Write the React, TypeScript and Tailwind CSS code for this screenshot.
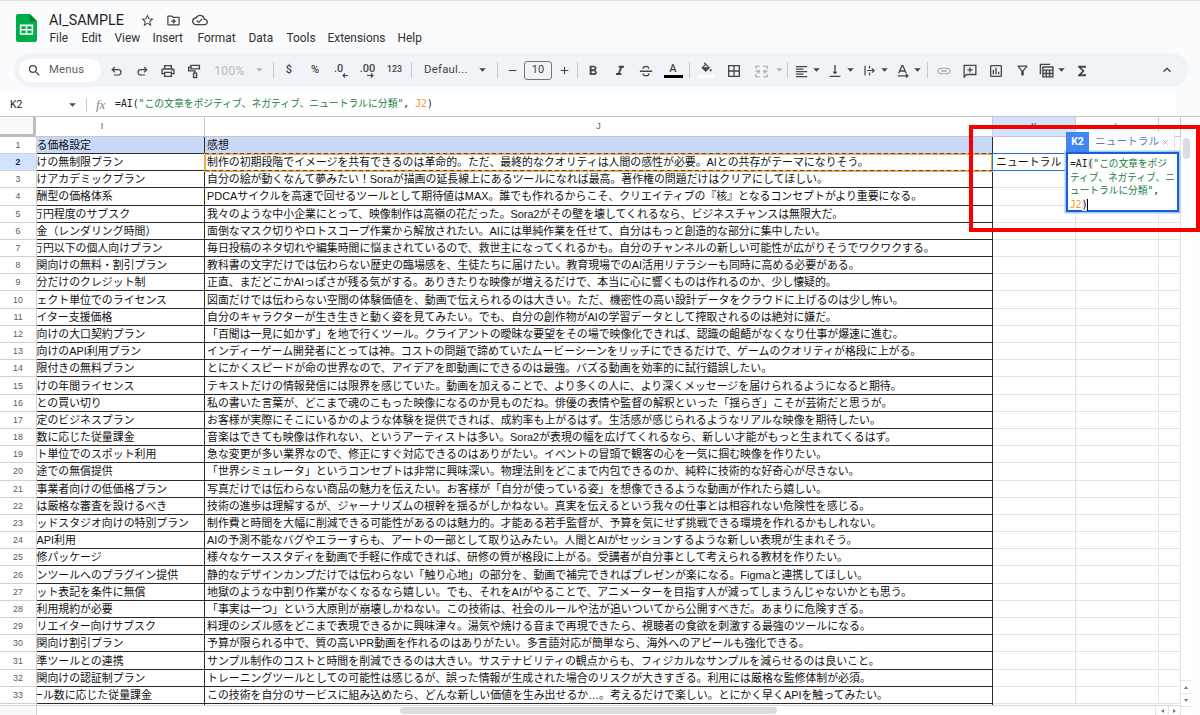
import type { ReactNode } from "react";
import {
  MdStarBorder,
  MdOutlineDriveFileMove,
  MdOutlineCloudDone,
  MdSearch,
  MdOutlinePrint,
  MdFormatBold,
  MdFormatItalic,
  MdBorderAll,
  MdFormatAlignLeft,
  MdVerticalAlignBottom,
  MdLink,
  MdOutlineInsertChart,
  MdOutlineFilterAlt,
  MdFunctions,
  MdKeyboardArrowUp,
  MdRemove,
  MdAdd,
} from "react-icons/md";

const rows: [string, string][] = [
  ["る価格設定", "感想"],
  ["けの無制限プラン", "制作の初期段階でイメージを共有できるのは革命的。ただ、最終的なクオリティは人間の感性が必要。AIとの共存がテーマになりそう。"],
  ["けアカデミックプラン", "自分の絵が動くなんて夢みたい！Soraが描画の延長線上にあるツールになれば最高。著作権の問題だけはクリアにしてほしい。"],
  ["酬型の価格体系", "PDCAサイクルを高速で回せるツールとして期待値はMAX。誰でも作れるからこそ、クリエイティブの『核』となるコンセプトがより重要になる。"],
  ["万円程度のサブスク", "我々のような中小企業にとって、映像制作は高嶺の花だった。Sora2がその壁を壊してくれるなら、ビジネスチャンスは無限大だ。"],
  ["金（レンダリング時間）", "面倒なマスク切りやロトスコープ作業から解放されたい。AIには単純作業を任せて、自分はもっと創造的な部分に集中したい。"],
  ["万円以下の個人向けプラン", "毎日投稿のネタ切れや編集時間に悩まされているので、救世主になってくれるかも。自分のチャンネルの新しい可能性が広がりそうでワクワクする。"],
  ["関向けの無料・割引プラン", "教科書の文字だけでは伝わらない歴史の臨場感を、生徒たちに届けたい。教育現場でのAI活用リテラシーも同時に高める必要がある。"],
  ["分だけのクレジット制", "正直、まだどこかAIっぽさが残る気がする。ありきたりな映像が増えるだけで、本当に心に響くものは作れるのか、少し懐疑的。"],
  ["ェクト単位でのライセンス", "図面だけでは伝わらない空間の体験価値を、動画で伝えられるのは大きい。ただ、機密性の高い設計データをクラウドに上げるのは少し怖い。"],
  ["イター支援価格", "自分のキャラクターが生き生きと動く姿を見てみたい。でも、自分の創作物がAIの学習データとして搾取されるのは絶対に嫌だ。"],
  ["向けの大口契約プラン", "「百聞は一見に如かず」を地で行くツール。クライアントの曖昧な要望をその場で映像化できれば、認識の齟齬がなくなり仕事が爆速に進む。"],
  ["向けのAPI利用プラン", "インディーゲーム開発者にとっては神。コストの問題で諦めていたムービーシーンをリッチにできるだけで、ゲームのクオリティが格段に上がる。"],
  ["限付きの無料プラン", "とにかくスピードが命の世界なので、アイデアを即動画にできるのは最強。バズる動画を効率的に試行錯誤したい。"],
  ["けの年間ライセンス", "テキストだけの情報発信には限界を感じていた。動画を加えることで、より多くの人に、より深くメッセージを届けられるようになると期待。"],
  ["との買い切り", "私の書いた言葉が、どこまで魂のこもった映像になるのか見ものだね。俳優の表情や監督の解釈といった「揺らぎ」こそが芸術だと思うが。"],
  ["定のビジネスプラン", "お客様が実際にそこにいるかのような体験を提供できれば、成約率も上がるはず。生活感が感じられるようなリアルな映像を期待したい。"],
  ["数に応じた従量課金", "音楽はできても映像は作れない、というアーティストは多い。Sora2が表現の幅を広げてくれるなら、新しい才能がもっと生まれてくるはず。"],
  ["ト単位でのスポット利用", "急な変更が多い業界なので、修正にすぐ対応できるのはありがたい。イベントの冒頭で観客の心を一気に掴む映像を作りたい。"],
  ["途での無償提供", "「世界シミュレータ」というコンセプトは非常に興味深い。物理法則をどこまで内包できるのか、純粋に技術的な好奇心が尽きない。"],
  ["事業者向けの低価格プラン", "写真だけでは伝わらない商品の魅力を伝えたい。お客様が「自分が使っている姿」を想像できるような動画が作れたら嬉しい。"],
  ["は厳格な審査を設けるべき", "技術の進歩は理解するが、ジャーナリズムの根幹を揺るがしかねない。真実を伝えるという我々の仕事とは相容れない危険性を感じる。"],
  ["ッドスタジオ向けの特別プラン", "制作費と時間を大幅に削減できる可能性があるのは魅力的。才能ある若手監督が、予算を気にせず挑戦できる環境を作れるかもしれない。"],
  ["API利用", "AIの予測不能なバグやエラーすらも、アートの一部として取り込みたい。人間とAIがセッションするような新しい表現が生まれそう。"],
  ["修パッケージ", "様々なケーススタディを動画で手軽に作成できれば、研修の質が格段に上がる。受講者が自分事として考えられる教材を作りたい。"],
  ["ンツールへのプラグイン提供", "静的なデザインカンプだけでは伝わらない「触り心地」の部分を、動画で補完できればプレゼンが楽になる。Figmaと連携してほしい。"],
  ["ット表記を条件に無償", "地獄のような中割り作業がなくなるなら嬉しい。でも、それをAIがやることで、アニメーターを目指す人が減ってしまうんじゃないかとも思う。"],
  ["利用規約が必要", "「事実は一つ」という大原則が崩壊しかねない。この技術は、社会のルールや法が追いついてから公開すべきだ。あまりに危険すぎる。"],
  ["リエイター向けサブスク", "料理のシズル感をどこまで表現できるかに興味津々。湯気や焼ける音まで再現できたら、視聴者の食欲を刺激する最強のツールになる。"],
  ["関向け割引プラン", "予算が限られる中で、質の高いPR動画を作れるのはありがたい。多言語対応が簡単なら、海外へのアピールも強化できる。"],
  ["準ツールとの連携", "サンプル制作のコストと時間を削減できるのは大きい。サステナビリティの観点からも、フィジカルなサンプルを減らせるのは良いこと。"],
  ["関向けの認証制プラン", "トレーニングツールとしての可能性は感じるが、誤った情報が生成された場合のリスクが大きすぎる。利用には厳格な監修体制が必須。"],
  ["ール数に応じた従量課金", "この技術を自分のサービスに組み込めたら、どんな新しい価値を生み出せるか…。考えるだけで楽しい。とにかく早くAPIを触ってみたい。"],
];

// Rows whose first visible character is partly scrolled out of the column.
const scrolled = new Set([5, 7, 33]);

const Cell = ({ w, children }: { w: string; children: ReactNode }) => (
  <div className={`flex h-full shrink-0 items-center justify-center ${w}`}>{children}</div>
);

const Divider = ({ m }: { m: string }) => <div className={`h-4 w-px shrink-0 bg-[#c7cacd] ${m}`} />;

const Caret = ({ dim = false }: { dim?: boolean }) => (
  <svg viewBox="0 0 8 4" className={`h-[4px] w-[7px] shrink-0 ${dim ? "text-[#b4b7ba]" : "text-[#444746]"}`}>
    <path d="M0.3 0h7.4L4 4z" fill="currentColor" />
  </svg>
);

const Svg = ({ children, className = "h-4 w-4" }: { children: ReactNode; className?: string }) => (
  <svg viewBox="0 0 16 16" fill="none" stroke="currentColor" strokeWidth="1.5" className={`shrink-0 ${className}`}>
    {children}
  </svg>
);

const SheetsLogo = () => (
  <svg viewBox="0 0 22 29" preserveAspectRatio="none" className="h-[28px] w-[21px] shrink-0">
    <path d="M2 0h12.500L22 7.500V27a2 2 0 0 1-2 2H2a2 2 0 0 1-2-2V2a2 2 0 0 1 2-2z" fill="#00ac47" />
    <path d="M14.500 0 22 7.500h-6.500a1 1 0 0 1-1-1z" fill="#00832d" />
    <path d="M4 11h14v10.500H4zM5.600 12.600v2.900h4.600v-2.900zM11.800 12.600v2.900h4.600v-2.900zM5.600 17v2.900h4.600V17zM11.800 17v2.900h4.600V17z" fill="#fff" fillRule="evenodd" />
  </svg>
);

const TitleBar = () => (
  <header className="flex h-[52px] shrink-0 pt-[9px] pl-[16px]">
    <div className="pt-[4px]">
      <SheetsLogo />
    </div>
    <div className="ml-[12px] flex flex-col">
      <div className="flex h-[20px] items-center text-[#444746]">
        <span className="w-[91px] text-[14.300px] leading-[20px] text-[#1f1f1f]">AI_SAMPLE</span>
        <MdStarBorder className="size-[15px]" />
        <MdOutlineDriveFileMove className="ml-[11px] size-[15px]" />
        <MdOutlineCloudDone className="ml-[11px] size-[16px]" />
      </div>
      <nav className="flex h-[17px] items-center pl-[0.500px] text-[11.900px] text-[#303233]">
        <span className="w-[32px]">File</span>
        <span className="w-[33px]">Edit</span>
        <span className="w-[38px]">View</span>
        <span className="w-[45px]">Insert</span>
        <span className="w-[51px]">Format</span>
        <span className="w-[38px]">Data</span>
        <span className="w-[41px]">Tools</span>
        <span className="w-[70px]">Extensions</span>
        <span>Help</span>
      </nav>
    </div>
  </header>
);

const Toolbar = () => (
  <div className="ml-[14px] flex h-[34px] w-[1174px] shrink-0 items-center rounded-full bg-[#f0f4f9] pl-[5px] text-[#444746]">
    <div className="flex h-[23px] w-[82px] shrink-0 items-center rounded-full bg-white pl-[8px]">
      <MdSearch className="size-[15px]" />
      <span className="ml-[7px] text-[11.300px] tracking-[0.02em] text-[#5c5f61]">Menus</span>
    </div>
    <div className="w-[2px] shrink-0" />
    <Cell w="w-[26px]">
      <Svg className="mt-[3px] h-[13px] w-[13px]">
        <path d="M6 2.500 2.800 5.700 6 8.900M3 5.700h7.200a3.200 3.200 0 0 1 0 6.600H4.800" />
      </Svg>
    </Cell>
    <Cell w="w-[26px]">
      <Svg className="mt-[3px] h-[13px] w-[13px]">
        <path d="M10 2.500l3.200 3.200L10 8.900M13 5.700H5.800a3.200 3.200 0 0 0 0 6.600h5.400" />
      </Svg>
    </Cell>
    <Cell w="w-[26px]"><MdOutlinePrint className="mt-[2px] size-[16px]" /></Cell>
    <Cell w="w-[26px]">
      <Svg className="mt-[2px] h-[15px] w-[15px]">
        <path d="M4.300 1.500h8.900v3.700H4.300zM4.300 3.300H1.800v4h6.700v2M7 9.700h3.200v4.800H7z" />
      </Svg>
    </Cell>
    <Cell w="w-[45px]"><span className="mt-[2px] text-[12px] tracking-[0.03em] text-[#b7babd]">100%</span></Cell>
    <Cell w="w-[14px]"><Caret dim /></Cell>
    <Divider m="ml-[7px] mr-[2px]" />
    <Cell w="w-[26px]"><span className="text-[11px] font-medium">$</span></Cell>
    <Cell w="w-[26px]"><span className="text-[11px] font-medium">%</span></Cell>
    <Cell w="w-[26px]">
      <div className="flex flex-col pt-px">
        <span className="text-[11px] leading-[9px] font-medium">.0</span>
        <svg viewBox="0 0 14 5" className="h-[5px] w-[14px]" stroke="currentColor" fill="none"><path d="M14 2.500H9M11 .5l-2 2 2 2" strokeWidth="1.100" /></svg>
      </div>
    </Cell>
    <Cell w="w-[27px]">
      <div className="flex flex-col pt-px">
        <span className="text-[11px] leading-[9px] font-medium">.00</span>
        <svg viewBox="0 0 14 5" className="h-[5px] w-[14px]" stroke="currentColor" fill="none"><path d="M7 2.500h6M11 .5l2 2-2 2" strokeWidth="1.100" /></svg>
      </div>
    </Cell>
    <Cell w="w-[27px]"><span className="text-[8.800px] font-medium">123</span></Cell>
    <Divider m="ml-[3px] mr-[12px]" />
    <span className="w-[48px] shrink-0 text-[11.400px] tracking-[0.02em]">Defaul...</span>
    <Cell w="w-[20px]"><Caret /></Cell>
    <Divider m="ml-[5px] mr-[2px]" />
    <Cell w="w-[24px]"><MdRemove className="size-[13px]" /></Cell>
    <div className="flex h-[19px] w-[28px] shrink-0 items-center justify-center rounded-[3px] border border-[#747775] text-[11px]">10</div>
    <Cell w="w-[24px]"><MdAdd className="size-[13px]" /></Cell>
    <Divider m="ml-[1px] mr-[2px]" />
    <Cell w="w-[26px]"><MdFormatBold className="mt-px size-[16px]" /></Cell>
    <Cell w="w-[27px]"><MdFormatItalic className="mt-px size-[16px]" /></Cell>
    <Cell w="w-[26px]">
      <Svg className="mt-px h-[14px] w-[14px]">
        <path d="M1 8.300h14M11.300 5.300C10.900 3.600 9.800 2.800 8 2.800c-2 0-3.300 1-3.300 2.500M4.600 11c.4 1.700 1.500 2.500 3.400 2.500 2 0 3.400-1 3.400-2.700" />
      </Svg>
    </Cell>
    <Cell w="w-[28px]">
      <div className="flex flex-col items-center pt-px">
        <span className="text-[11px] leading-[11px] font-medium">A</span>
        <div className="mt-px h-[3px] w-[19px] bg-black" />
      </div>
    </Cell>
    <Divider m="ml-[2px] mr-[3px]" />
    <Cell w="w-[27px]">
      <div className="flex flex-col items-center">
        <Svg className="h-[12px] w-[13px]">
          <path d="M5 1l6.500 6.500L7 12 2.500 7.500 7 3" />
          <path d="M3 7.800h8L7 12z" fill="currentColor" />
          <circle cx="13.500" cy="11" r="1.500" fill="currentColor" stroke="none" />
        </Svg>
        <div className="mt-px h-[3px] w-[17px] bg-white" />
      </div>
    </Cell>
    <Cell w="w-[28px]"><MdBorderAll className="mt-[2px] size-[16px]" /></Cell>
    <Cell w="w-[26px]">
      <Svg className="mt-[2px] h-[15px] w-[15px] text-[#b0b3b6]">
        <path d="M2 5V2.500h4M10 2.500h4V5M2 11v2.500h4M10 13.500h4V11M1.500 8h4M4 6.200 5.700 8 4 9.800M14.500 8h-4M12 6.200 10.300 8 12 9.800" />
      </Svg>
    </Cell>
    <Cell w="w-[10px]"><Caret dim /></Cell>
    <Divider m="ml-[3px] mr-[2px]" />
    <Cell w="w-[22px]"><MdFormatAlignLeft className="mt-[2px] size-[15px]" /></Cell>
    <Cell w="w-[9px]"><Caret /></Cell>
    <Cell w="ml-[3px] w-[22px]"><MdVerticalAlignBottom className="mt-[2px] size-[16px]" /></Cell>
    <Cell w="w-[9px]"><Caret /></Cell>
    <Cell w="ml-[3px] w-[22px]">
      <Svg className="mt-px h-[13px] w-[13px]">
        <path d="M2.500 2v12M8 2v3.500M8 10.500V14M5 8h8.500M11 5.300 13.700 8 11 10.700" />
      </Svg>
    </Cell>
    <Cell w="w-[8px]"><Caret /></Cell>
    <Cell w="ml-[4px] w-[22px]">
      <Svg className="mt-px h-[14px] w-[14px]">
        <path d="M3 10.500 6.800 2h1L11.600 10.500M4.300 8h6M2 13.500h11M11.500 11.500l2 2-2 2" />
      </Svg>
    </Cell>
    <Cell w="w-[7px]"><Caret /></Cell>
    <Divider m="ml-[6px] mr-[2px]" />
    <Cell w="w-[27px]"><MdLink className="mt-px size-[16px] text-[#a9acaf]" /></Cell>
    <Cell w="w-[25px]">
      <Svg className="mt-px h-[14px] w-[14px]">
        <path d="M1.300 15V1.500h13.400V12H4.200zM8 3.800v6M5 6.800h6" />
      </Svg>
    </Cell>
    <Cell w="w-[27px]"><MdOutlineInsertChart className="mt-px size-[16px]" /></Cell>
    <Cell w="w-[26px]"><MdOutlineFilterAlt className="mt-px size-[15px]" /></Cell>
    <Cell w="w-[22px]">
      <Svg className="mt-px h-[15px] w-[15px]">
        <path d="M4.200 4.200h10.600v10.600H4.200zM4.200 7.600h10.600M4.200 11.200h10.600M7.700 7.600v7.200M11.300 7.600v7.200M1.500 12V1.500H12" />
      </Svg>
    </Cell>
    <Cell w="w-[9px]"><Caret /></Cell>
    <Cell w="ml-[3px] w-[26px]"><MdFunctions className="mt-px size-[16px]" /></Cell>
    <div className="mr-[13px] ml-auto">
      <MdKeyboardArrowUp className="size-[16px]" />
    </div>
  </div>
);

const mono = "font-['DejaVu_Sans_Mono','Noto_Sans_CJK_JP',monospace]";

const FormulaBar = () => (
  <div className="mt-[6px] flex h-[23px] w-[1176px] shrink-0 items-center bg-white">
    <span className="w-[69px] pl-[10px] text-[10.500px] text-[#1f1f1f]">K2</span>
    <Caret />
    <div className="ml-[10px] h-[14px] w-px bg-[#c7cacd]" />
    <span className="ml-[9px] w-[19px] font-['Liberation_Serif',serif] text-[13px] text-[#80868b] italic">fx</span>
    <span className={`text-[9.800px] whitespace-pre text-[#202124] ${mono}`}>
      =AI(<span className="text-[#188038]">"この文章をポジティブ、ネガティブ、ニュートラルに分類"</span>, <span className="text-[#f7981d]">J2</span>)
    </span>
  </div>
);

const heading = "flex shrink-0 items-center justify-center border-r border-[#c7c9cc]";

const ColumnHeaders = () => (
  <div className="flex h-[20.800px] shrink-0 border-t border-[#c4c6c8] bg-white text-[9px] text-[#575b5f]">
    <div className="h-full w-[36px] shrink-0 border-r-[3px] border-b-[3px] border-[#bdbdbd] bg-[#f8f9fa]" />
    <div className="flex border-b border-[#c4c6c8]">
      <div className={`${heading} w-[169px] pr-[36px]`}>I</div>
      <div className={`${heading} w-[788px]`}>J</div>
      <div className={`${heading} w-[83px] bg-[#d3e3fd] text-[#0b2e6b]`}>K</div>
      <div className={`${heading} w-[83px]`}>L</div>
      <div className={`${heading} w-[22px]`} />
    </div>
    <div className="flex-1 bg-[#f9fbfd]" />
  </div>
);

const Grid = () => (
  <div className="relative flex flex-1 overflow-hidden bg-white">
    <div className="w-[1181px] shrink-0">
      {rows.map(([plan, comment], i) => {
        const n = i + 1;
        const fill = n === 1 ? "bg-[#c9daf8]" : "bg-white";
        return (
          <div key={n} className="flex h-[17.190px] text-[10.900px] leading-[16px] whitespace-nowrap text-[#111]">
            <div className={`flex w-[37px] shrink-0 items-center justify-center border-r border-b border-[#cfd1d3] font-['Liberation_Sans',sans-serif] text-[8.800px] ${n === 2 ? "bg-[#d3e3fd] font-bold text-[#0b2e6b]" : "bg-white text-[#575b5f]"}`}>
              {n}
            </div>
            <div className={`flex w-[168px] shrink-0 items-center overflow-hidden border-r border-b border-[#2b2b2b] ${fill}`}>
              <span className={scrolled.has(n) ? "-ml-[5px]" : "-ml-[0.500px]"}>{plan}</span>
            </div>
            <div className={`flex w-[788px] shrink-0 items-center overflow-hidden border-r border-b border-[#2b2b2b] pl-[2px] ${fill}`}>
              {comment}
            </div>
            <div className="flex w-[83px] shrink-0 items-center border-r border-b border-[#e1e3e4] pl-[3px]">
              {n === 2 ? "ニュートラル" : ""}
            </div>
            <div className="w-[83px] shrink-0 border-r border-b border-[#e1e3e4]" />
            <div className="w-[22px] shrink-0 border-r border-b border-[#e1e3e4]" />
          </div>
        );
      })}
      <div className="flex h-[2px] border-b border-[#d5d7d9]">
        <div className="w-[37px] border-r border-[#cfd1d3]" />
        <div className="w-[168px] border-r border-[#2b2b2b]" />
        <div className="w-[788px] border-r border-[#2b2b2b]" />
      </div>
      <div className="flex h-[10px]">
        <div className="w-[37px] border-r border-[#cfd1d3] bg-[#f8f9fa]" />
        <div className="flex w-[1118px] pl-[363px]">
          <div className="mt-[1.500px] h-[7px] w-[377px] rounded-full bg-[#dadce0]" />
        </div>
        <div className="flex w-[13px] items-center justify-center border-l border-[#e3e5e6]">
          <svg viewBox="0 0 3 4" className="h-[4px] w-[3px]"><path d="M3 0v4L0 2z" fill="#777" /></svg>
        </div>
        <div className="flex w-[13px] items-center justify-center border-x border-[#e3e5e6]">
          <svg viewBox="0 0 3 4" className="h-[4px] w-[3px]"><path d="M0 0v4l3-2z" fill="#777" /></svg>
        </div>
      </div>
    </div>
    <div className="flex w-[10px] flex-col items-center bg-white">
      <div className="mt-px h-[21px] w-[7px] rounded-full bg-[#dadce0]" />
      <div className="mt-auto flex h-[13px] w-full items-center justify-center border-t border-[#e3e5e6]">
        <svg viewBox="0 0 4 3" className="h-[3px] w-[4px]"><path d="M0 3h4L2 0z" fill="#777" /></svg>
      </div>
      <div className="mb-[8px] flex h-[14px] w-full items-center justify-center border-y border-[#e3e5e6]">
        <svg viewBox="0 0 4 3" className="h-[3px] w-[4px]"><path d="M0 0h4L2 3z" fill="#777" /></svg>
      </div>
    </div>
    <div className="flex-1 bg-[#fdfdfe]" />
    <svg className="absolute top-[16.200px] left-[204px] h-[19px] w-[789px]" fill="none">
      <rect x="1" y="1" width="787" height="17" stroke="#f0ac48" strokeWidth="2" />
      <path d="M1 .5h787M1 17.500h787" stroke="#4a4a55" strokeWidth="1" strokeDasharray="4 3" />
    </svg>
    <div className="absolute top-[16.200px] left-[992px] h-[18px] w-[76px] border-[1.500px] border-[#1a73e8]" />
  </div>
);

const CellEditor = () => (
  <div className="absolute top-[131px] left-[1066px] w-[113px]">
    <div className="flex h-[20px] w-[109px] items-center border-r border-[#e3e5e6] bg-white">
      <div className="flex h-full w-[23px] shrink-0 items-center justify-center bg-[#4285f4] text-[10.500px] font-bold text-white">K2</div>
      <span className="ml-[6px] text-[10.700px] leading-[18px] whitespace-nowrap text-[#5b82c9]">ニュートラル</span>
      <svg viewBox="0 0 5 5" className="ml-[4px] h-[5px] w-[5px] shrink-0" stroke="#9aa0a6"><path d="M.3.3l4.400 4.400M4.700.3.3 4.700" strokeWidth=".8" /></svg>
    </div>
    <div className={`h-[60px] border-2 border-[#1a5ed6] bg-white pt-[3px] pl-[2px] text-[9.700px] leading-[13.700px] whitespace-pre text-[#202124] shadow-[0_0_0_1.500px_#a8c7fa] ${mono}`}>
      <div>=AI<span className="bg-[#e8eaed]">(</span><span className="text-[#188038]">"この文章をポジ</span></div>
      <div className="text-[#188038]">ティブ、ネガティブ、ニ</div>
      <div><span className="text-[#188038]">ュートラルに分類"</span>,</div>
      <div className="flex items-center">
        <span className="text-[#f7981d]">J2</span>
        <span className="bg-[#e8eaed] leading-[12px]">)</span>
        <span className="-ml-px h-[12px] w-px bg-black" />
      </div>
    </div>
  </div>
);

export default function App() {
  return (
    <div className="relative flex h-[715px] w-[1200px] flex-col overflow-hidden border-t border-[#e1e3e4] bg-[#f9fbfd] font-['Roboto','Noto_Sans_CJK_JP',sans-serif]">
      <TitleBar />
      <Toolbar />
      <FormulaBar />
      <div className="flex min-h-0 flex-1 flex-col font-['Liberation_Sans','Noto_Sans_CJK_JP',sans-serif]">
        <ColumnHeaders />
        <Grid />
      </div>
      <CellEditor />
      <div className="absolute top-[124px] left-[969px] h-[107px] w-[231px] border-[4.500px] border-[#f60000]" />
    </div>
  );
}
